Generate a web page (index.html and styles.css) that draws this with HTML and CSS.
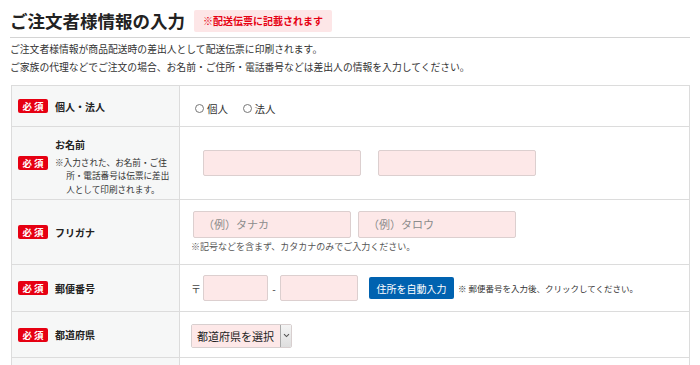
FILE: index.html
```html
<!DOCTYPE html>
<html lang="ja">
<head>
  <meta charset="UTF-8">
  <title>ご注文者様情報の入力</title>
  <link rel="stylesheet" href="styles.css">
</head>
<body>
  <section class="order-form">
    <div class="form-head">
      <h2>ご注文者様情報の入力</h2>
      <span class="head-tag">※配送伝票に記載されます</span>
    </div>
    <p class="lead">
      ご注文者様情報が商品配送時の差出人として配送伝票に印刷されます。<br>
      ご家族の代理などでご注文の場合、お名前・ご住所・電話番号などは差出人の情報を入力してください。
    </p>

    <table class="form-table">
      <tr class="row-type">
        <th>
          <div class="label">
            <span class="req">必 須</span>
            <span class="label-name">個人・法人</span>
          </div>
        </th>
        <td>
          <label class="radio"><input type="radio" name="kind"> 個人</label>
          <label class="radio"><input type="radio" name="kind"> 法人</label>
        </td>
      </tr>
      <tr class="row-name">
        <th>
          <div class="label">
            <span class="req">必 須</span>
            <div>
              <span class="label-name">お名前</span>
              <p class="label-note">※入力された、お名前・ご住所・電話番号は伝票に差出人として印刷されます。</p>
            </div>
          </div>
        </th>
        <td>
          <div class="name-inputs">
            <input class="field field-name" type="text">
            <input class="field field-name" type="text">
          </div>
        </td>
      </tr>
      <tr class="row-kana">
        <th>
          <div class="label">
            <span class="req">必 須</span>
            <span class="label-name">フリガナ</span>
          </div>
        </th>
        <td>
          <div class="kana-inputs">
            <input class="field field-name" type="text" placeholder="（例）タナカ">
            <input class="field field-name" type="text" placeholder="（例）タロウ">
          </div>
          <p class="hint">※記号などを含まず、カタカナのみでご入力ください。</p>
        </td>
      </tr>
      <tr class="row-zip">
        <th>
          <div class="label">
            <span class="req">必 須</span>
            <span class="label-name">郵便番号</span>
          </div>
        </th>
        <td>
          <div class="zip-line">
            <span class="zip-mark">〒</span>
            <input class="field zip-1" type="text">
            <span class="zip-dash">-</span>
            <input class="field zip-2" type="text">
            <button class="btn-auto" type="button">住所を自動入力</button>
            <span class="zip-note">※ 郵便番号を入力後、クリックしてください。</span>
          </div>
        </td>
      </tr>
      <tr class="row-pref">
        <th>
          <div class="label">
            <span class="req">必 須</span>
            <span class="label-name">都道府県</span>
          </div>
        </th>
        <td>
          <div class="select">
            <span class="select-text">都道府県を選択</span>
            <span class="select-arrow">
              <svg width="7" height="5" viewBox="0 0 7 5"><path d="M1 1.2 L3.5 3.6 L6 1.2" fill="none" stroke="#555" stroke-width="1.1"/></svg>
            </span>
          </div>
        </td>
      </tr>
      <tr class="row-city">
        <th></th>
        <td></td>
      </tr>
    </table>
  </section>
</body>
</html>
```

FILE: styles.css
```css
* {
  margin: 0;
  padding: 0;
  box-sizing: border-box;
}

body {
  font-family: "Noto Sans CJK JP", "Noto Sans", sans-serif;
  color: #333;
  background: #fff;
}

.order-form {
  width: 680px;
  margin: 0 10px;
}

/* heading */
.form-head {
  display: flex;
  align-items: center;
  gap: 9px;
  padding: 10px 0 5px;
  border-bottom: 1px solid #d4d4d4;
}

.form-head h2 {
  font-size: 17.5px;
  font-weight: 700;
  color: #222;
  line-height: 22px;
}

.head-tag {
  background: #fde6e7;
  color: #e60012;
  font-size: 10px;
  font-weight: 700;
  line-height: 22px;
  padding: 0 9px;
  border-radius: 2px;
}

.lead {
  font-size: 9.8px;
  line-height: 18px;
  padding-top: 2px;
  color: #333;
}

/* table */
.form-table {
  width: 679px;
  margin: 9px 0 0 1px;
  border-collapse: collapse;
}

.form-table th,
.form-table td {
  border: 1px solid #dcdcdc;
  vertical-align: middle;
  text-align: left;
}

.form-table th {
  width: 168px;
  background: #f6f7f7;
  font-weight: 400;
  padding: 0 6px;
}

.form-table td {
  padding: 0 11px;
  background: #fff;
}

.row-type { height: 41px; }
.row-name { height: 73px; }
.row-kana { height: 65px; }
.row-zip { height: 47px; }
.row-pref { height: 46px; }
.row-city { height: 46px; }

.label {
  display: flex;
  align-items: center;
  gap: 7px;
}

.req {
  flex: none;
  width: 30px;
  height: 14px;
  line-height: 14px;
  text-align: center;
  background: #e60012;
  color: #fff;
  font-size: 9.5px;
  font-weight: 700;
  border-radius: 2px;
}

.label-name {
  font-size: 10px;
  font-weight: 700;
  color: #222;
}

.label-note {
  font-size: 8.6px;
  line-height: 13.5px;
  padding-left: 1.3em;
  text-indent: -1.3em;
  color: #333;
  margin-top: 2px;
}

/* radios */
.radio {
  display: inline-flex;
  align-items: center;
  gap: 3px;
  font-size: 10.5px;
  margin-right: 7px;
  margin-left: 4px;
}

.radio input {
  appearance: none;
  width: 9px;
  height: 9px;
  border: 1px solid #777;
  border-radius: 50%;
  background: #fff;
}

/* inputs */
.field {
  height: 26px;
  background: #fde8e8;
  border: 1px solid #dccfcf;
  border-radius: 2px;
  font-family: inherit;
  font-size: 11px;
  padding: 0 9px;
  color: #333;
}

.field::placeholder {
  color: #8c8c8c;
}

.field-name {
  width: 158px;
}

.name-inputs {
  display: flex;
  gap: 17px;
  margin-left: 12px;
}

.kana-inputs {
  display: flex;
  gap: 7px;
  margin-left: 2px;
}

.kana-inputs .field {
  height: 27px;
}

.hint {
  font-size: 9px;
  line-height: 14px;
  color: #555;
  margin-top: 2px;
}

/* zip */
.zip-line {
  display: flex;
  align-items: center;
  font-size: 10px;
}

.zip-mark {
  width: 12px;
  color: #444;
}

.zip-1 { width: 65px; }
.zip-2 { width: 78px; }

.zip-dash {
  width: 12px;
  text-align: center;
}

.btn-auto {
  margin-left: 11px;
  height: 22px;
  width: 85px;
  background: #0062b0;
  color: #fff;
  border: none;
  border-radius: 2px;
  font-family: inherit;
  font-size: 10px;
}

.zip-note {
  margin-left: 4px;
  font-size: 8.5px;
  color: #333;
}

/* select */
.select {
  display: inline-flex;
  height: 24px;
  border: 1px solid #d8cfcf;
  border-radius: 2px;
  overflow: hidden;
}

.select-text {
  display: flex;
  align-items: center;
  background: #fde8e8;
  font-size: 11px;
  padding: 0 5px;
  width: 88px;
  white-space: nowrap;
  color: #222;
}

.select-arrow {
  display: flex;
  align-items: center;
  justify-content: center;
  width: 11px;
  background: linear-gradient(#f4f4f4, #dedede);
  border-left: 1px solid #a9a9a9;
}
```
